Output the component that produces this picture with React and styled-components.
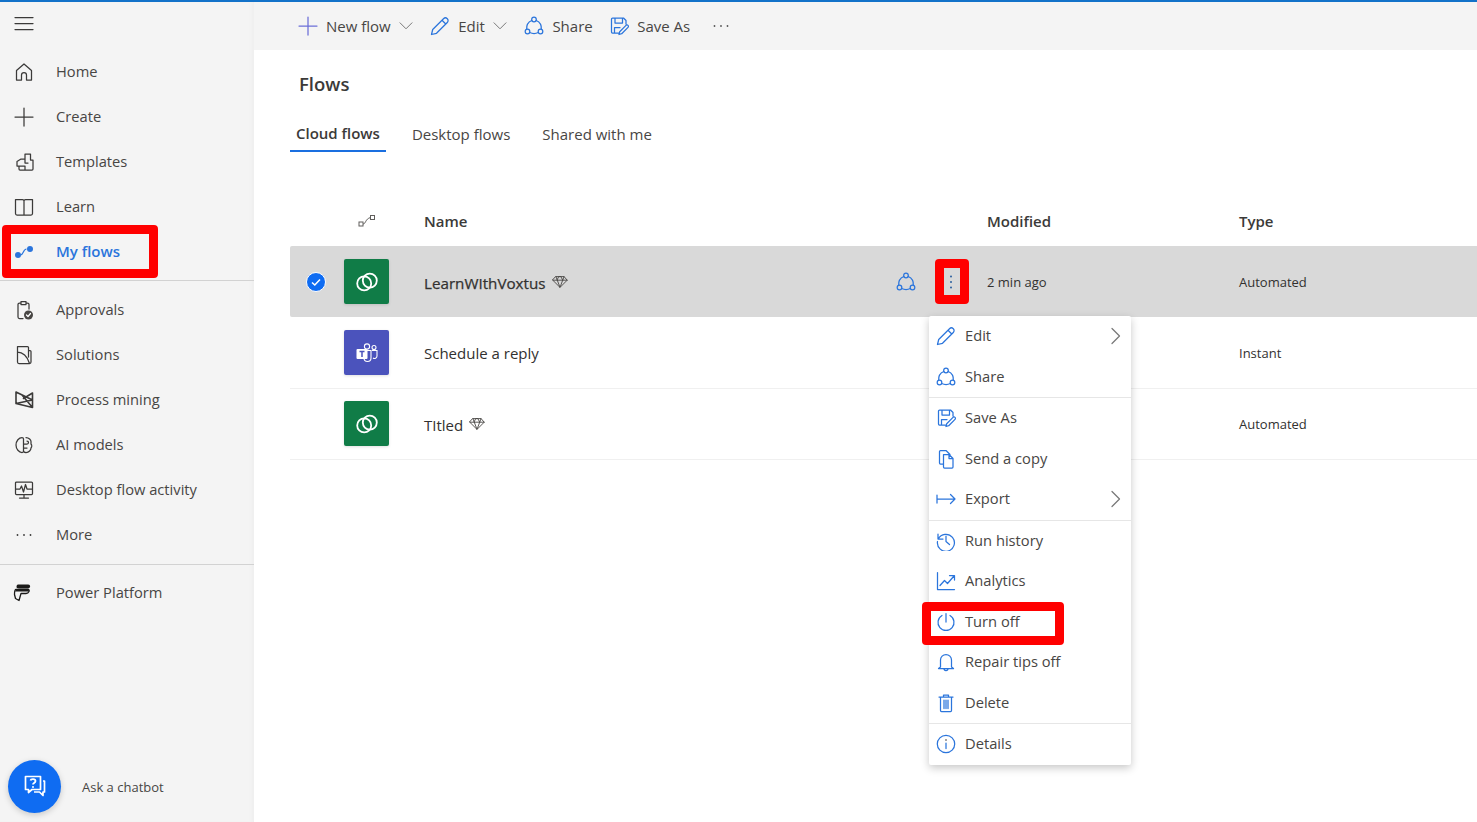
import styled, { createGlobalStyle } from "styled-components";

const GlobalStyle = createGlobalStyle`
    html, body {
        margin: 0;
        padding: 0;
        background: #ffffff;
        font-family: "Open Sans", "Noto Sans", sans-serif;
        color: #323130;
    }
    * {
        box-sizing: border-box;
    }
`;

const BLUE = "#2b75dc";
const DARK = "#3b3a39";

function Icon({ children, color = DARK, size = 20, weight = 1.25 }) {
    return (
        <svg width={size} height={size} viewBox="0 0 20 20" fill="none" stroke={color} strokeWidth={weight} strokeLinecap="round" strokeLinejoin="round" style={{ flex: "none", display: "block" }}>
            {children}
        </svg>
    );
}

const icons = {
    menu: <path d="M1 3.5h18M1 9.500h18M1 15.500h18" />,
    home: <path d="M2.500 18V8.500L10 2l7.500 6.500V18h-5v-5a2.500 2.500 0 0 0-5 0v5z" />,
    plus: <path d="M10 1v18M1 10h18" />,
    templates: <path d="M11 2h5.500v6H19v9a1 1 0 0 1-1 1H6a1 1 0 0 1-1-1v-3H3V9.500L7 7h4zM11 7v4h3M5 14h6v4" />,
    learn: <path d="M1.500 2.500h7a1.500 1.500 0 0 1 1.500 1.500v14H3A1.500 1.500 0 0 1 1.500 16.500zM18.500 2.500h-7A1.500 1.500 0 0 0 10 4v14h7a1.500 1.500 0 0 0 1.500-1.500z" />,
    approvals: (
        <>
            <path d="M9 18.500H5.500A1.500 1.500 0 0 1 4 17V4.500A1.500 1.500 0 0 1 5.500 3H7M12 3h1.500A1.500 1.500 0 0 1 15 4.500V9M7 1.500h5v3H7z" />
            <circle cx="14.500" cy="15" r="4.500" fill="#484644" stroke="none" />
            <path d="M12.500 15l1.500 1.500 2.500-3" stroke="#ffffff" />
        </>
    ),
    solutions: <path d="M3.500 1.500h10a1 1 0 0 1 1 1v3h1.500a1 1 0 0 1 1 1V17a1.500 1.500 0 0 1-1.500 1.500H5A1.500 1.500 0 0 1 3.500 17zM3.500 7c5 0 10 4 12 11.500M14.500 5.500V12" />,
    mining: <path d="M2 2L18.500 10v7.500L2 13.500zM18.500 3v7L2 13.500M18.500 17.500L8 5M18.500 3L9.500 8.500" />,
    models: <path d="M8 2.500C5 2.500 2 6 2 10s3 7.500 6 7.500c1 0 1.500-.5 1.500-1.500V4c0-1-.5-1.500-1.500-1.500zM12 2.500c3 0 5 2.500 5 4v2.500c1 1 1 3 0 4 0 2-2 4.500-5 4.500-1.500 0-2.500-1-2.500-1M9.500 9H13a1.500 1.500 0 0 0 0-3M9.500 13H13" />,
    activity: <path d="M2.500 2h15a1 1 0 0 1 1 1v10.500a1 1 0 0 1-1 1h-15a1 1 0 0 1-1-1V3a1 1 0 0 1 1-1zM10 14.500V18M5.500 18h9M1.500 9H6l1.500-3 2 6 2-7.500L13 9h5.500" />,
    more: (
        <>
            <circle cx="3.500" cy="10" r=".9" fill="currentColor" stroke="none" />
            <circle cx="10" cy="10" r=".9" fill="currentColor" stroke="none" />
            <circle cx="16.500" cy="10" r=".9" fill="currentColor" stroke="none" />
        </>
    ),
    chevronDown: <path d="M2.500 6l7.500 7.500L17.500 6" />,
    chevronRight: <path d="M6 2.500L13.500 10 6 17.500" />,
    pencil: <path d="M1.500 18.500l1.200-5L13.500 2.700a2.400 2.400 0 0 1 3.800 3.800L6.500 17.300zM12 4.200l3.800 3.800" />,
    share: (
        <>
            <circle cx="10" cy="3.500" r="2.300" />
            <circle cx="3.500" cy="15.500" r="2.300" />
            <circle cx="16.500" cy="15.500" r="2.300" />
            <path d="M7.800 4.500C4.300 6 2.300 9.500 2.700 13.300M12.200 4.500c3.500 1.500 5.500 5 5.100 8.800M5.700 16.500c2.700 1.300 6 1.300 8.600 0" />
        </>
    ),
    saveAs: <path d="M9.500 17H3.500a1 1 0 0 1-1-1V3a1 1 0 0 1 1-1h11l2.500 2.500v3.500M6 2v5h7.500V2M5.500 17v-5.500H11M10 18.500l.7-2.800 6.300-6.300a1.400 1.400 0 0 1 2 2l-6.300 6.300z" />,
    copy: <path d="M7.500 15H4.500a1 1 0 0 1-1-1V2.500a1 1 0 0 1 1-1H10l4 4M7.500 5.500h5.500l4 4v8.500a1 1 0 0 1-1 1H8.500a1 1 0 0 1-1-1zM13 5.500v4h4" />,
    exportTo: <path d="M1 6v8M1 10h18M14.500 5.500L19 10l-4.500 4.500" />,
    history: <path d="M2 3v5h5M2.300 8A8.500 8.500 0 1 1 1.500 10.500M10 5v5.500l3.500 3" />,
    analytics: <path d="M1.500 1.500v17h17M4 14.500l4.500-5 3 3 6.500-7.500M13.500 4.500H18.500V9" />,
    power: <path d="M10 1.500v8.500M6 3.500a8 8 0 1 0 8 0" />,
    bell: <path d="M4.500 15V8a5.500 5.500 0 0 1 11 0v7l2 1.500h-15zM8 16.500a2 2 0 0 0 4 0" />,
    trash: <path d="M3 4h14M7.500 4V2h5v2M4.500 4v13.500a1 1 0 0 0 1 1h9a1 1 0 0 0 1-1V4M8 7v8.500M10 7v8.500M12 7v8.500" />,
    info: (
        <>
            <circle cx="10" cy="10" r="8.700" />
            <path d="M10 9v5.500" />
            <circle cx="10" cy="6" r=".8" fill="currentColor" stroke="none" />
        </>
    ),
    diamond: <path d="M5.500 4h9L18 8l-8 8-8-8zM2 8h16M7 8l3 8 3-8-2-4H9zM5.500 4L7 8M14.500 4L13 8" />,
};

function PowerPlatformLogo() {
    return (
        <svg width="20" height="20" viewBox="0 0 20 20" style={{ flex: "none", display: "block", overflow: "visible" }}>
            <g transform="translate(-2 0)">
                <path d="M6 1.500h10c2 0 2.500 1.500 2 2.500-.5 1.200-1.500 1.500-3 1.500H7c-2 0-2.500-.8-2.500-1.500C4.500 2.800 5 1.500 6 1.500z" fill="#1b1a19" />
                <path d="M4 6.500h12c1 0 1.500 1 1 2-.6 1.400-1.500 2-3 2H9L7 17.500l-3.500-2-1-4C2.500 8.500 2.800 6.500 4 6.500z" fill="none" stroke="#1b1a19" strokeWidth="1.300" strokeLinejoin="round" />
                <path d="M4 6.500h12c.8 0 1 1 .8 2H3z" fill="#1b1a19" />
            </g>
        </svg>
    );
}

function DataverseLogo() {
    return (
        <svg width="24" height="24" viewBox="0 0 24 24" fill="none" stroke="#ffffff" strokeWidth="1.800">
            <circle cx="9.200" cy="13.400" r="7" />
            <circle cx="14.800" cy="10.600" r="7" />
        </svg>
    );
}

function TeamsLogo() {
    return (
        <svg width="24" height="24" viewBox="0 0 24 24" fill="none" stroke="#ffffff" strokeWidth="1.100">
            <circle cx="12" cy="5.500" r="2.600" />
            <circle cx="19" cy="6.500" r="2" />
            <path d="M9 9.500h7v7.500a3.500 3.500 0 0 1-7 0zM17 9.500h5v5.500a2.500 2.500 0 0 1-4 2" />
            <rect x="1.500" y="8" width="11" height="10" rx="1" fill="#ffffff" stroke="none" />
            <path d="M4.500 10.500h5M7 10.500v5.500" stroke="#4b53bc" strokeWidth="1.500" />
        </svg>
    );
}

function ChatIcon() {
    return (
        <svg width="22" height="24" viewBox="0 0 22 24" fill="none" stroke="#ffffff" strokeWidth="1.700" strokeLinejoin="round">
            <path d="M1.500 1.500h15v13H8l-3.500 3v-3h-3z" />
            <path d="M19 6h1.500v11H19v3.500L15.500 17H10" />
            <path d="M6.500 5.500c.3-2 5-2 5 .5 0 2-2.500 2-2.500 3.500" strokeWidth="1.800" />
            <circle cx="9" cy="12" r="1" fill="#ffffff" stroke="none" />
        </svg>
    );
}

const firstNav = [
    ["home", "Home"],
    ["plus", "Create"],
    ["templates", "Templates"],
    ["learn", "Learn"],
];

const secondNav = [
    ["approvals", "Approvals"],
    ["solutions", "Solutions"],
    ["mining", "Process mining", 1.6],
    ["models", "AI models"],
    ["activity", "Desktop flow activity"],
    ["more", "More"],
];

const menuGroups = [
    [
        { icon: "pencil", label: "Edit", arrow: true },
        { icon: "share", label: "Share" },
    ],
    [
        { icon: "saveAs", label: "Save As" },
        { icon: "copy", label: "Send a copy" },
        { icon: "exportTo", label: "Export", arrow: true },
    ],
    [
        { icon: "history", label: "Run history" },
        { icon: "analytics", label: "Analytics" },
        { icon: "power", label: "Turn off", marked: true },
        { icon: "bell", label: "Repair tips off" },
        { icon: "trash", label: "Delete" },
    ],
    [{ icon: "info", label: "Details" }],
];

function NavLink({ icon, label, weight }) {
    return (
        <NavRow>
            <IconSlot>
                <Icon weight={weight}>{icons[icon]}</Icon>
            </IconSlot>
            <NavLabel>{label}</NavLabel>
        </NavRow>
    );
}

function FlowRow({ logo, name, premium, type, selected }) {
    return (
        <Row $selected={selected}>
            <CheckCell>
                {selected && (
                    <CheckMark>
                        <svg width="12" height="12" viewBox="0 0 12 12" fill="none" stroke="#ffffff" strokeWidth="1.600">
                            <path d="M2 6.500l2.800 2.500L10 3.500" />
                        </svg>
                    </CheckMark>
                )}
            </CheckCell>
            <LogoCell>{logo}</LogoCell>
            <NameCell>
                <FlowName $selected={selected} $premium={premium}>{name}</FlowName>
                {premium && (
                    <Icon size={18} color="#484644" weight={1}>
                        {icons.diamond}
                    </Icon>
                )}
            </NameCell>
            <ActionCell>
                {selected && (
                    <>
                        <Icon color={BLUE}>{icons.share}</Icon>
                        <DotsButton>
                            <svg width="4" height="16" viewBox="0 0 4 16" fill="#2b5f9e">
                                <circle cx="2" cy="2.500" r="1" />
                                <circle cx="2" cy="8" r="1" />
                                <circle cx="2" cy="13.500" r="1" />
                            </svg>
                            <Marker $left={-8} $top={-8} $width={34} $height={45} />
                        </DotsButton>
                    </>
                )}
            </ActionCell>
            <SmallCell>{selected ? "2 min ago" : ""}</SmallCell>
            <SmallCell>{type}</SmallCell>
        </Row>
    );
}

export default function App() {
    return (
        <>
            <GlobalStyle />
            <Page>
                <TopStripe />
                <Body>
                    <Sidebar>
                        <BurgerRow>
                            <Icon>{icons.menu}</Icon>
                        </BurgerRow>
                        <NavSection>
                            {firstNav.map(([icon, label]) => (
                                <NavLink key={label} icon={icon} label={label} />
                            ))}
                            <NavRow>
                                <IconSlot>
                                    <svg width="20" height="20" viewBox="0 0 20 20" fill={BLUE}>
                                        <circle cx="4" cy="13" r="3" />
                                        <circle cx="16" cy="7" r="3" />
                                        <path d="M6.500 13c3 0 2.500-6 6-6" fill="none" stroke={BLUE} strokeWidth="1.200" />
                                    </svg>
                                </IconSlot>
                                <NavLabel $active>My flows</NavLabel>
                                <Marker $left={2} $top={-4} $width={156} $height={53} />
                            </NavRow>
                        </NavSection>
                        <NavSection>
                            {secondNav.map(([icon, label, weight]) => (
                                <NavLink key={label} icon={icon} label={label} weight={weight} />
                            ))}
                        </NavSection>
                        <NavRow>
                            <IconSlot>
                                <PowerPlatformLogo />
                            </IconSlot>
                            <NavLabel>Power Platform</NavLabel>
                        </NavRow>
                        <ChatFooter>
                            <ChatButton>
                                <ChatIcon />
                            </ChatButton>
                            <ChatLabel>Ask a chatbot</ChatLabel>
                        </ChatFooter>
                    </Sidebar>
                    <Main>
                        <Toolbar>
                            <ToolButton>
                                <Icon color="#6b6fd8">{icons.plus}</Icon>
                                <span>New flow</span>
                                <Caret>
                                    <Icon size={16} color="#7a7a7a">{icons.chevronDown}</Icon>
                                </Caret>
                            </ToolButton>
                            <ToolButton>
                                <Icon color={BLUE}>{icons.pencil}</Icon>
                                <span>Edit</span>
                                <Caret>
                                    <Icon size={16} color="#7a7a7a">{icons.chevronDown}</Icon>
                                </Caret>
                            </ToolButton>
                            <ToolButton>
                                <Icon color={BLUE}>{icons.share}</Icon>
                                <span>Share</span>
                            </ToolButton>
                            <ToolButton>
                                <Icon color={BLUE}>{icons.saveAs}</Icon>
                                <span>Save As</span>
                            </ToolButton>
                            <MoreButton>
                                <Icon color="#555555">{icons.more}</Icon>
                            </MoreButton>
                        </Toolbar>
                        <Content>
                            <Title>Flows</Title>
                            <Tabs>
                                <Tab $active>Cloud flows</Tab>
                                <Tab>Desktop flows</Tab>
                                <Tab>Shared with me</Tab>
                            </Tabs>
                            <Table>
                                <HeaderRow>
                                    <span />
                                    <HeaderIconCell>
                                        <svg width="18" height="14" viewBox="0 0 18 14" fill="none" stroke="#605e5c" strokeWidth="1">
                                            <rect x="1" y="8" width="4" height="4" />
                                            <rect x="12.500" y="1.500" width="4" height="4" />
                                            <path d="M5 10c3 0 2-5 7.500-6.500" />
                                        </svg>
                                    </HeaderIconCell>
                                    <HeaderName>Name</HeaderName>
                                    <span />
                                    <HeaderCell>Modified</HeaderCell>
                                    <HeaderCell>Type</HeaderCell>
                                </HeaderRow>
                                <FlowRow selected logo={<LogoTile $color="#107c47"><DataverseLogo /></LogoTile>} name="LearnWIthVoxtus" premium type="Automated" />
                                <FlowRow logo={<LogoTile $color="#4b53bc"><TeamsLogo /></LogoTile>} name="Schedule a reply" type="Instant" />
                                <FlowRow logo={<LogoTile $color="#107c47"><DataverseLogo /></LogoTile>} name="TItled" premium type="Automated" />
                            </Table>
                        </Content>
                        <ContextMenu>
                            {menuGroups.map((group, index) => (
                                <MenuGroup key={index}>
                                    {group.map((item) => (
                                        <MenuItem key={item.label}>
                                            <Icon color={BLUE}>{icons[item.icon]}</Icon>
                                            <MenuLabel>{item.label}</MenuLabel>
                                            {item.arrow && (
                                                <Icon color="#7a7a7a">{icons.chevronRight}</Icon>
                                            )}
                                            {item.marked && <Marker $left={-7} $top={0} $width={142} $height={43} />}
                                        </MenuItem>
                                    ))}
                                </MenuGroup>
                            ))}
                        </ContextMenu>
                    </Main>
                </Body>
            </Page>
        </>
    );
}

const Page = styled.div`
    width: 1477px;
    height: 822px;
    display: flex;
    flex-direction: column;
    overflow: hidden;
`;

const TopStripe = styled.div`
    height: 2px;
    flex: none;
    background: #1272c9;
`;

const Body = styled.div`
    flex: 1;
    display: flex;
    min-height: 0;
`;

const Sidebar = styled.nav`
    width: 254px;
    flex: none;
    display: flex;
    flex-direction: column;
    background: #f4f4f4;
    box-shadow: inset -4px 0 4px -3px #ececec;
`;

const BurgerRow = styled.div`
    height: 47px;
    flex: none;
    display: flex;
    align-items: flex-start;
    padding: 12px 0 0 14px;
`;

const NavSection = styled.div`
    padding-bottom: 6px;
    margin-bottom: 6px;
    border-bottom: 1px solid #d2d2d2;

    & + & {
        padding-bottom: 7px;
        margin-bottom: 5px;
    }
`;

const NavRow = styled.div`
    position: relative;
    height: 45px;
    display: flex;
    align-items: center;
    gap: 22px;
    padding-left: 14px;
`;

const IconSlot = styled.div`
    width: 20px;
    height: 20px;
    flex: none;
    color: #3b3a39;
`;

const NavLabel = styled.span`
    font-size: ${(props) => (props.$active ? "15px" : "14.700px")};
    padding-bottom: 2px;
    color: ${(props) => (props.$active ? "#2b75dc" : "#484644")};
    font-weight: ${(props) => (props.$active ? 600 : 400)};
`;

const Marker = styled.div`
    position: absolute;
    left: ${(props) => props.$left}px;
    top: ${(props) => props.$top}px;
    width: ${(props) => props.$width}px;
    height: ${(props) => props.$height}px;
    border: 9px solid #ff0000;
    border-radius: 4px;
    pointer-events: none;
`;

const ChatFooter = styled.div`
    margin-top: auto;
    display: flex;
    align-items: center;
    gap: 21px;
    padding: 0 0 9px 8px;
`;

const ChatButton = styled.div`
    width: 53px;
    height: 53px;
    border-radius: 50%;
    background: #0f6cf2;
    display: flex;
    align-items: center;
    justify-content: center;
    box-shadow: 0 2px 6px rgba(0, 0, 0, 0.18);
`;

const ChatLabel = styled.span`
    font-size: 13px;
    color: #484644;
`;

const Main = styled.main`
    position: relative;
    flex: 1;
    min-width: 0;
    display: flex;
    flex-direction: column;
`;

const Toolbar = styled.div`
    height: 48px;
    flex: none;
    display: flex;
    align-items: center;
    gap: 16.500px;
    padding-left: 44px;
    background: #f4f4f4;
`;

const ToolButton = styled.div`
    display: flex;
    align-items: center;
    gap: 8px;
    font-size: 15px;
    color: #484644;
`;

const Caret = styled.div`
    margin-left: -1px;
`;

const MoreButton = styled.div`
    margin-left: 4px;
    color: #555555;
`;

const Content = styled.div`
    padding-left: 36px;
`;

const Title = styled.h1`
    margin: 0;
    padding: 21px 0 0 9px;
    height: 65px;
    font-size: 18.500px;
    line-height: 26px;
    font-weight: 600;
    color: #3b3a39;
`;

const Tabs = styled.div`
    display: flex;
    align-items: stretch;
    gap: 20px;
    height: 37px;
`;

const Tab = styled.div`
    padding: ${(props) => (props.$active ? "0" : "2px")} 6px 0;
    display: flex;
    align-items: center;
    font-size: 15px;
    font-weight: ${(props) => (props.$active ? 600 : 400)};
    color: ${(props) => (props.$active ? "#3b3a39" : "#484644")};
    border-bottom: 2px solid ${(props) => (props.$active ? "#1a6fe0" : "transparent")};
`;

const Table = styled.div`
    margin-top: 43px;
`;

const columns = "54px 45px 35px 463px 100px 252px 1fr";

const HeaderRow = styled.div`
    height: 51px;
    display: grid;
    grid-template-columns: ${columns};
    align-items: center;
`;

const HeaderIconCell = styled.div`
    display: flex;
    justify-content: center;
`;

const HeaderName = styled.span`
    grid-column: 4;
    font-size: 15px;
    font-weight: 600;
    color: #3b3a39;
`;

const HeaderCell = styled.span`
    font-size: 15px;
    font-weight: 600;
    color: #3b3a39;
`;

const Row = styled.div`
    height: 71px;
    display: grid;
    grid-template-columns: ${columns};
    align-items: center;
    background: ${(props) => (props.$selected ? "#d9d9d9" : "transparent")};
    box-shadow: 0 1px 0 ${(props) => (props.$selected ? "transparent" : "#f0f0f0")};
    border-radius: ${(props) => (props.$selected ? "2px 0 0 2px" : "0")};
`;

const CheckCell = styled.div`
    display: flex;
    justify-content: flex-start;
    padding-left: 16px;
`;

const CheckMark = styled.div`
    width: 20px;
    height: 20px;
    border-radius: 50%;
    border: 1.500px solid #ffffff;
    background: #0f6cf2;
    display: flex;
    align-items: center;
    justify-content: center;
`;

const LogoCell = styled.div`
    grid-column: 2 / span 2;
`;

const LogoTile = styled.div`
    width: 45px;
    height: 45px;
    border-radius: 2px;
    background: ${(props) => props.$color};
    display: flex;
    align-items: center;
    justify-content: center;
    box-shadow: 0 1px 3px rgba(0, 0, 0, 0.12);
`;

const NameCell = styled.div`
    display: flex;
    align-items: center;
    gap: 5px;
`;

const FlowName = styled.span`
    padding-top: ${(props) => (props.$premium ? "3px" : "1px")};
    font-size: ${(props) => (props.$selected ? "15.200px" : "15px")};
    -webkit-text-stroke: ${(props) => (props.$selected ? "0.25px" : "0")};
    color: #323130;
`;

const ActionCell = styled.div`
    display: flex;
    align-items: center;
    gap: 27px;
    padding-left: 9px;
`;

const DotsButton = styled.div`
    position: relative;
    width: 16px;
    height: 29px;
    display: flex;
    align-items: center;
    justify-content: center;
`;

const SmallCell = styled.span`
    padding-top: 1px;
    font-size: 13px;
    color: #323130;
`;

const ContextMenu = styled.div`
    position: absolute;
    left: 675px;
    top: 314px;
    width: 202px;
    background: #ffffff;
    border-radius: 2px;
    box-shadow: 0 3px 8px rgba(0, 0, 0, 0.22);
`;

const MenuGroup = styled.div`
    & + & {
        border-top: 1px solid #e6e6e6;
    }
`;

const MenuItem = styled.div`
    position: relative;
    height: 40.500px;
    display: flex;
    align-items: center;
    gap: 9px;
    padding: 0 5px 0 7px;
`;

const MenuLabel = styled.span`
    flex: 1;
    padding-bottom: 2px;
    font-size: 14.700px;
    color: #484644;
`;
